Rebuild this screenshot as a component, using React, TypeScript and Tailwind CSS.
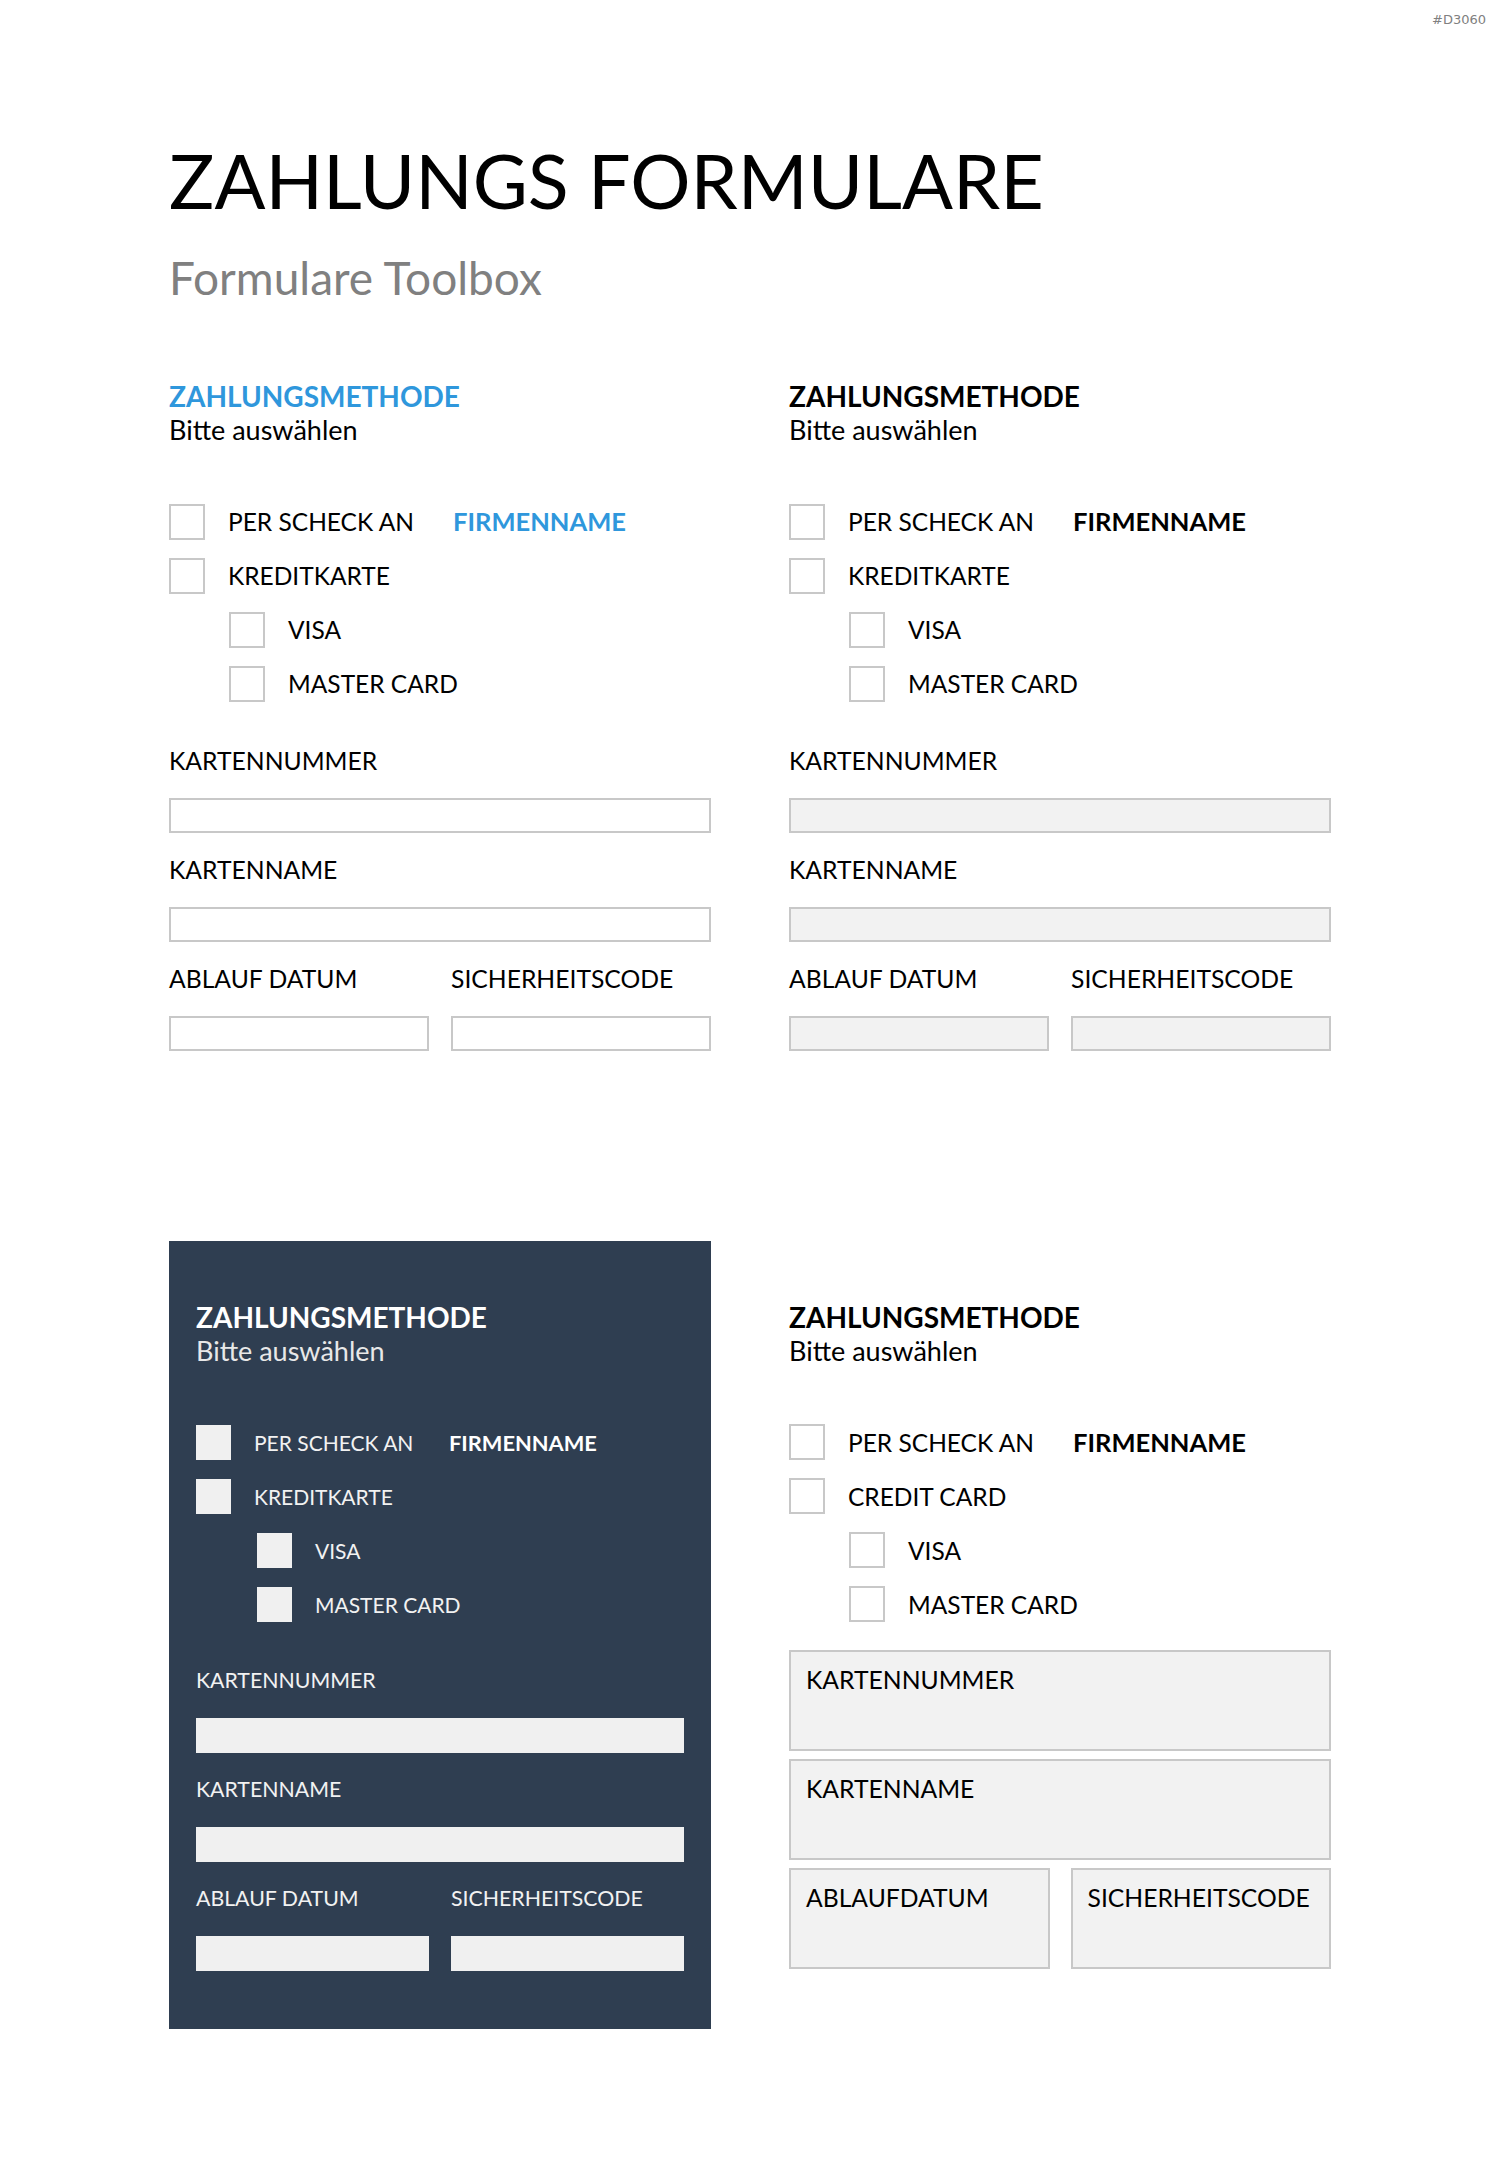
import React from 'react';

type Tone = 'outline' | 'filled' | 'dark' | 'boxed';

type Option = {
  label: string;
  company?: string;
  nested?: boolean;
};

const baseOptions: Option[] = [
  { label: 'PER SCHECK AN', company: 'FIRMENNAME' },
  { label: 'KREDITKARTE' },
  { label: 'VISA', nested: true },
  { label: 'MASTER CARD', nested: true },
];

const Checkbox: React.FC<{ tone: Tone }> = ({ tone }) =>
  tone === 'dark' ? (
    <span className="block w-[35px] h-[35px] shrink-0 bg-[#f0f0f0]" />
  ) : (
    <span className="block w-[36px] h-[36px] shrink-0 border-2 border-[#c8c8c8] bg-white" />
  );

const OptionRow: React.FC<{ tone: Tone; option: Option }> = ({ tone, option }) => {
  const dark = tone === 'dark';
  const text = dark ? 'text-[21px] text-[#f2f2f2]' : 'text-[24.5px] text-black';
  const companyColor =
    tone === 'outline' ? 'text-[#2f97dc]' : dark ? 'text-white' : 'text-black';

  return (
    <div
      className={`flex items-center h-[54px] ${
        option.nested ? (dark ? 'pl-[61px]' : 'pl-[60px]') : ''
      }`}
    >
      <Checkbox tone={tone} />
      <span
        className={`ml-[23px] leading-[25px] ${text} ${
          option.company ? (dark ? 'w-[195px] shrink-0' : 'w-[225px] shrink-0') : ''
        }`}
      >
        {option.label}
      </span>
      {option.company && (
        <span className={`leading-[25px] font-bold ${dark ? 'text-[21.8px]' : 'text-[25.5px]'} ${companyColor}`}>
          {option.company}
        </span>
      )}
    </div>
  );
};

const FieldLabel: React.FC<{ tone: Tone; className?: string; children: React.ReactNode }> = ({
  tone,
  className = '',
  children,
}) => (
  <p
    className={`leading-[25px] ${
      tone === 'dark' ? 'text-[21.3px] text-[#f2f2f2]' : 'text-[24.7px] text-black'
    } ${className}`}
  >
    {children}
  </p>
);

const Field: React.FC<{ tone: Tone; className?: string }> = ({ tone, className = '' }) => {
  const look =
    tone === 'dark'
      ? 'bg-[#f0f0f0]'
      : tone === 'filled'
      ? 'bg-[#f2f2f2] border-2 border-[#c8c8c8]'
      : 'bg-white border-2 border-[#c8c8c8]';
  return <div className={`h-[35px] ${look} ${className}`} />;
};

const BoxField: React.FC<{ label: string }> = ({ label }) => (
  <div className="h-[101px] border-2 border-[#c8c8c8] bg-[#f2f2f2] pl-[15px] pt-[15px]">
    <p className="text-[24.7px] leading-[25px] text-black">{label}</p>
  </div>
);

const PaymentForm: React.FC<{ tone: Tone }> = ({ tone }) => {
  const dark = tone === 'dark';
  const options =
    tone === 'boxed'
      ? baseOptions.map((o) => (o.label === 'KREDITKARTE' ? { ...o, label: 'CREDIT CARD' } : o))
      : baseOptions;

  const headingColor =
    tone === 'outline' ? 'text-[#2f97dc]' : dark ? 'text-white' : 'text-black';

  return (
    <section className={`pt-[63px] pb-[58px] ${dark ? 'bg-[#2f3e51] px-[27px]' : ''}`}>
      <h2 className={`text-[28px] leading-[26px] font-bold ${headingColor}`}>ZAHLUNGSMETHODE</h2>
      <p className={`mt-[9px] text-[27px] leading-[24.5px] ${dark ? 'text-[#e8e8e8]' : 'text-black'}`}>
        Bitte auswählen
      </p>

      <div className="mt-[52px]">
        {options.map((o) => (
          <OptionRow key={o.label} tone={tone} option={o} />
        ))}
      </div>

      {tone === 'boxed' ? (
        <div className="mt-[19px] flex flex-col gap-[8px]">
          <BoxField label="KARTENNUMMER" />
          <BoxField label="KARTENNAME" />
          <div className="grid grid-cols-2 gap-x-[21px]">
            <BoxField label="ABLAUFDATUM" />
            <BoxField label="SICHERHEITSCODE" />
          </div>
        </div>
      ) : (
        <div>
          <FieldLabel tone={tone} className="mt-[37px]">KARTENNUMMER</FieldLabel>
          <Field tone={tone} className="mt-[25px]" />
          <FieldLabel tone={tone} className="mt-[24px]">KARTENNAME</FieldLabel>
          <Field tone={tone} className="mt-[25px]" />
          <div className="grid grid-cols-2 gap-x-[22px]">
            <div>
              <FieldLabel tone={tone} className="mt-[24px]">ABLAUF DATUM</FieldLabel>
              <Field tone={tone} className="mt-[25px]" />
            </div>
            <div>
              <FieldLabel tone={tone} className="mt-[24px]">SICHERHEITSCODE</FieldLabel>
              <Field tone={tone} className="mt-[25px]" />
            </div>
          </div>
        </div>
      )}
    </section>
  );
};

const App: React.FC = () => {
  return (
    <div className="relative w-[1500px] h-[2167px] bg-white font-['Lato','Open_Sans',sans-serif]">
      <span className="absolute top-[13px] right-[14px] text-[13px] leading-[13px] text-[#808080] font-['DejaVu_Sans',sans-serif]">
        #D3060
      </span>

      <div className="pl-[169px] pt-[142px]">
        <h1 className="text-[75.4px] leading-[76px] text-black">ZAHLUNGS FORMULARE</h1>
        <p className="mt-[39px] text-[46px] leading-[42px] text-[#808080]">Formulare Toolbox</p>

        {/* Vier Varianten des Zahlungsformulars im Raster */}
        <div className="mt-[21px] grid grid-cols-[542px_542px] gap-x-[78px] gap-y-[132px]">
          <PaymentForm tone="outline" />
          <PaymentForm tone="filled" />
          <PaymentForm tone="dark" />
          <PaymentForm tone="boxed" />
        </div>
      </div>
    </div>
  );
};

export default App;
